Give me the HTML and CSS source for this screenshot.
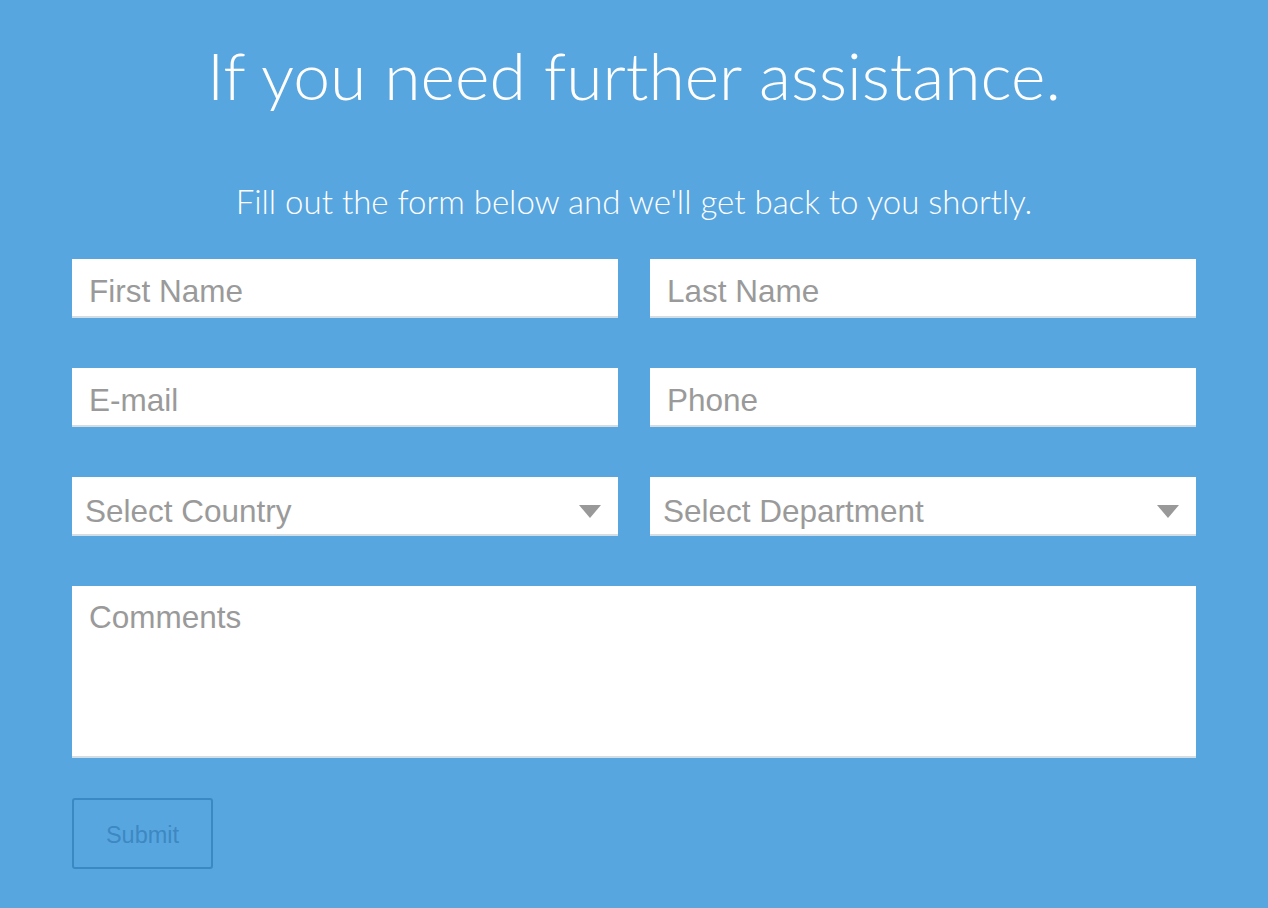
FILE: index.html
```html
<!DOCTYPE html>
<html lang="en">
<head>
<meta charset="utf-8">
<title>Contact</title>
<link rel="stylesheet" href="styles.css">
</head>
<body>
<main class="page">
  <h1 class="title">If you need further assistance.</h1>
  <p class="subtitle">Fill out the form below and we'll get back to you shortly.</p>
  <form class="form">
    <div class="row">
      <input class="field" type="text" placeholder="First Name">
      <input class="field" type="text" placeholder="Last Name">
    </div>
    <div class="row">
      <input class="field" type="text" placeholder="E-mail">
      <input class="field" type="text" placeholder="Phone">
    </div>
    <div class="row">
      <div class="select">
        <span class="select-text">Select Country</span>
        <svg class="caret" width="22" height="13" viewBox="0 0 22 13"><path d="M0 0H22L11 13Z" fill="#999"/></svg>
      </div>
      <div class="select">
        <span class="select-text">Select Department</span>
        <svg class="caret" width="22" height="13" viewBox="0 0 22 13"><path d="M0 0H22L11 13Z" fill="#999"/></svg>
      </div>
    </div>
    <textarea class="comments" placeholder="Comments"></textarea>
    <button class="submit" type="button">Submit</button>
  </form>
</main>
</body>
</html>
```
FILE: styles.css
```css
* { box-sizing: border-box; }
html, body { margin: 0; padding: 0; }
body {
  background: #58a6df;
  width: 1268px;
  height: 908px;
  overflow: hidden;
}
.page {
  padding: 0 72px;
}
.title {
  margin: 0;
  padding-top: 35px;
  text-align: center;
  font-family: Lato, "Noto Sans", sans-serif;
  font-weight: 300;
  font-size: 66px;
  line-height: 80px;
  color: #ffffff;
}
.subtitle {
  margin: 66px 0 0;
  text-align: center;
  font-family: Lato, "Noto Sans", sans-serif;
  font-weight: 300;
  font-size: 33px;
  line-height: 40px;
  color: #ffffff;
}
.form {
  margin-top: 38px;
  display: flex;
  flex-direction: column;
}
.row {
  display: grid;
  grid-template-columns: 1fr 1fr;
  column-gap: 32px;
  margin-bottom: 50px;
}
.field, .select, .comments {
  background: #ffffff;
  border: none;
  border-bottom: 2px solid #d5dde4;
  border-radius: 0;
  outline: none;
  font-family: "Liberation Sans", Arial, sans-serif;
  font-size: 31.5px;
  color: #9a9a9a;
}
.field {
  height: 59px;
  padding: 7px 17px 0;
}
.field::placeholder, .comments::placeholder {
  color: #9a9a9a;
  opacity: 1;
}
.select {
  height: 59px;
  display: flex;
  align-items: center;
  justify-content: space-between;
  padding: 12px 17px 0 13px;
}
.caret { display: block; margin-top: -1px; }
.comments {
  height: 172px;
  padding: 13px 17px;
  resize: none;
  margin-bottom: 40px;
  width: 100%;
  display: block;
}
.submit {
  width: 141px;
  height: 71px;
  background: transparent;
  border: 2px solid #3b89c4;
  border-radius: 3px;
  font-family: "Liberation Sans", Arial, sans-serif;
  font-size: 23.5px;
  color: #3d88c2;
  padding: 4px 0 0;
}
```
